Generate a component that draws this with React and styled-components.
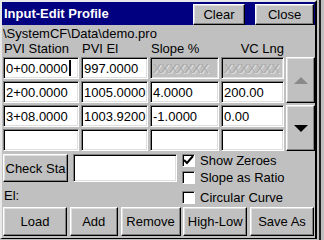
import React from 'react';
import styled, { createGlobalStyle } from 'styled-components';

const GlobalStyle = createGlobalStyle`
  html, body {
    margin: 0;
    padding: 0;
  }
  body {
    font-family: 'Liberation Sans', Arial, sans-serif;
    font-size: 13px;
    background: #c0c0c0;
    color: #000;
  }
`;

const rows = [
  ['0+00.0000', '997.0000', null, null],
  ['2+00.0000', '1005.0000', '4.0000', '200.00'],
  ['3+08.0000', '1003.9200', '-1.0000', '0.00'],
  ['', '', '', ''],
];

const headers = ['PVI Station', 'PVI El', 'Slope %', 'VC Lng'];

const bottomButtons = [
  { label: 'Load', width: 64 },
  { label: 'Add', width: 48 },
  { label: 'Remove', width: 60 },
  { label: 'High-Low', width: 64 },
  { label: 'Save As', width: 64 },
];

const options = [
  { label: 'Show Zeroes', checked: true },
  { label: 'Slope as Ratio', checked: false },
  { label: 'Circular Curve', checked: false },
];

export default function App() {
  return (
    <>
      <GlobalStyle />
      <Screen>
        <Window>
          <TitleBar>
            <Title>Input-Edit Profile</Title>
            <TitleButton w={52}>Clear</TitleButton>
            <TitleButton w={59}>Close</TitleButton>
          </TitleBar>
          <Body>
            <PathLine>\SystemCF\Data\demo.pro</PathLine>
            <HeaderRow>
              {headers.map((h, i) => (
                <HeaderCell key={h} right={i === 3}>{h}</HeaderCell>
              ))}
            </HeaderRow>
            <Table>
              {rows.map((row, r) =>
                row.map((value, c) =>
                  value === null ? (
                    <Cell key={`${r}-${c}`} disabled>
                      <Masked>XXXXXXX</Masked>
                    </Cell>
                  ) : (
                    <Cell key={`${r}-${c}`}>
                      {value}
                      {r === 0 && c === 0 && <Caret />}
                    </Cell>
                  )
                )
              )}
              <ScrollButton row={1}>
                <Arrow up disabled />
              </ScrollButton>
              <ScrollButton row={3}>
                <Arrow />
              </ScrollButton>
            </Table>
            <Lower>
              <LeftColumn>
                <CheckRow>
                  <Button w={65} h={28}>Check Sta</Button>
                  <Field />
                </CheckRow>
                <ElLabel>El:</ElLabel>
              </LeftColumn>
              <Options>
                {options.map(o => (
                  <Option key={o.label}>
                    <Box>
                      {o.checked && (
                        <svg width="11" height="11" viewBox="0 0 11 11">
                          <path d="M1 5 L4 8 L10 1" stroke="#000" strokeWidth="2" fill="none" />
                        </svg>
                      )}
                    </Box>
                    {o.label}
                  </Option>
                ))}
              </Options>
            </Lower>
            <ButtonBar>
              {bottomButtons.map(b => (
                <Button key={b.label} w={b.width} h={29}>{b.label}</Button>
              ))}
            </ButtonBar>
          </Body>
        </Window>
        <SideRail />
      </Screen>
    </>
  );
}

const Screen = styled.div`
  width: 324px;
  height: 240px;
  display: flex;
  background: #c0c0c0;
  overflow: hidden;
`;

const Window = styled.div`
  width: 317px;
  height: 239px;
  box-sizing: border-box;
  border-top: 2px solid #e8e8e8;
  border-left: 2px solid #e8e8e8;
  border-right: 2px solid #000;
  border-bottom: 1px solid #000;
  display: flex;
  flex-direction: column;
`;

const SideRail = styled.div`
  width: 7px;
  height: 240px;
  box-sizing: border-box;
  border-left: 2px solid #c0c0c0;
  border-right: 3px solid #c0c0c0;
  background: #202020;
`;

const TitleBar = styled.div`
  height: 23px;
  background: #000080;
  display: flex;
  align-items: flex-end;
  gap: 0;
`;

const Title = styled.div`
  flex: 1;
  align-self: center;
  padding-left: 2px;
  color: #fff;
  font-weight: bold;
  font-size: 13px;
`;

const raised = `
  background: #c0c0c0;
  box-sizing: border-box;
  border: 1px solid;
  border-color: #fff #000 #000 #fff;
  box-shadow: inset -1px -1px #808080, inset 1px 1px #dfdfdf;
  font-family: 'Liberation Sans', Arial, sans-serif;
  font-size: 13px;
  color: #000;
  display: flex;
  align-items: center;
  justify-content: center;
  padding: 0;
`;

const TitleButton = styled.div`
  ${raised}
  width: ${p => p.w}px;
  height: 21px;
  margin-right: ${p => (p.w === 52 ? 10 : 1)}px;
`;

const Body = styled.div`
  flex: 1;
  padding-left: 1px;
  display: flex;
  flex-direction: column;
`;

const PathLine = styled.div`
  height: 16px;
  line-height: 17px;
`;

const HeaderRow = styled.div`
  height: 16px;
  display: grid;
  grid-template-columns: 76px 67px 69px 63px;
  column-gap: 2px;
  line-height: 16px;
`;

const HeaderCell = styled.div`
  text-align: ${p => (p.right ? 'right' : 'left')};
  padding-left: 1px;
`;

const Table = styled.div`
  display: grid;
  grid-template-columns: 76px 67px 69px 63px 29px;
  grid-template-rows: repeat(4, 22px);
  gap: 2px;
`;

const Cell = styled.div`
  box-sizing: border-box;
  border: 1px solid;
  border-color: #808080 #fff #fff #808080;
  box-shadow: inset 1px 1px #000, inset -1px -1px #dfdfdf;
  background: ${p => (p.disabled ? '#c0c0c0' : '#fff')};
  padding-left: 2px;
  display: flex;
  align-items: center;
  white-space: nowrap;
  overflow: hidden;
`;

const Masked = styled.span`
  color: #a8a8a8;
  text-shadow: 1px 1px 0 #e4e4e4;
  letter-spacing: -0.8px;
`;

const Caret = styled.span`
  display: inline-block;
  width: 2px;
  height: 16px;
  background: #000;
  margin-left: 1px;
`;

const ScrollButton = styled.div`
  ${raised}
  grid-column: 5;
  grid-row: ${p => p.row} / span 2;
`;

const Arrow = styled.div`
  width: 0;
  height: 0;
  border-left: 7px solid transparent;
  border-right: 7px solid transparent;
  ${p =>
    p.up
      ? `border-bottom: 7px solid ${p.disabled ? '#8a8a8a' : '#000'};`
      : `border-top: 7px solid #000;`}
`;

const Lower = styled.div`
  margin-top: 3px;
  height: 50px;
  display: flex;
`;

const LeftColumn = styled.div`
  width: 177px;
  display: flex;
  flex-direction: column;
`;

const CheckRow = styled.div`
  display: flex;
  gap: 5px;
`;

const Button = styled.div`
  ${raised}
  width: ${p => p.w}px;
  height: ${p => p.h}px;
`;

const Field = styled.div`
  width: 104px;
  height: 28px;
  box-sizing: border-box;
  border: 1px solid;
  border-color: #808080 #fff #fff #808080;
  box-shadow: inset 1px 1px #000, inset -1px -1px #dfdfdf;
  background: #fff;
`;

const ElLabel = styled.div`
  margin-top: 6px;
  padding-left: 1px;
`;

const Options = styled.div`
  display: grid;
  grid-template-rows: 17px 20px 15px;
  padding-left: 2px;
`;

const Option = styled.div`
  display: flex;
  align-items: flex-start;
  gap: 5px;
  line-height: 13px;
  font-size: 13px;
`;

const Box = styled.div`
  width: 13px;
  height: 13px;
  box-sizing: border-box;
  border: 1px solid;
  border-color: #808080 #fff #fff #808080;
  box-shadow: inset 1px 1px #000;
  background: #fff;
  display: flex;
  align-items: center;
  justify-content: center;
`;

const ButtonBar = styled.div`
  margin-top: 3px;
  width: 311px;
  display: flex;
  justify-content: space-between;
`;
